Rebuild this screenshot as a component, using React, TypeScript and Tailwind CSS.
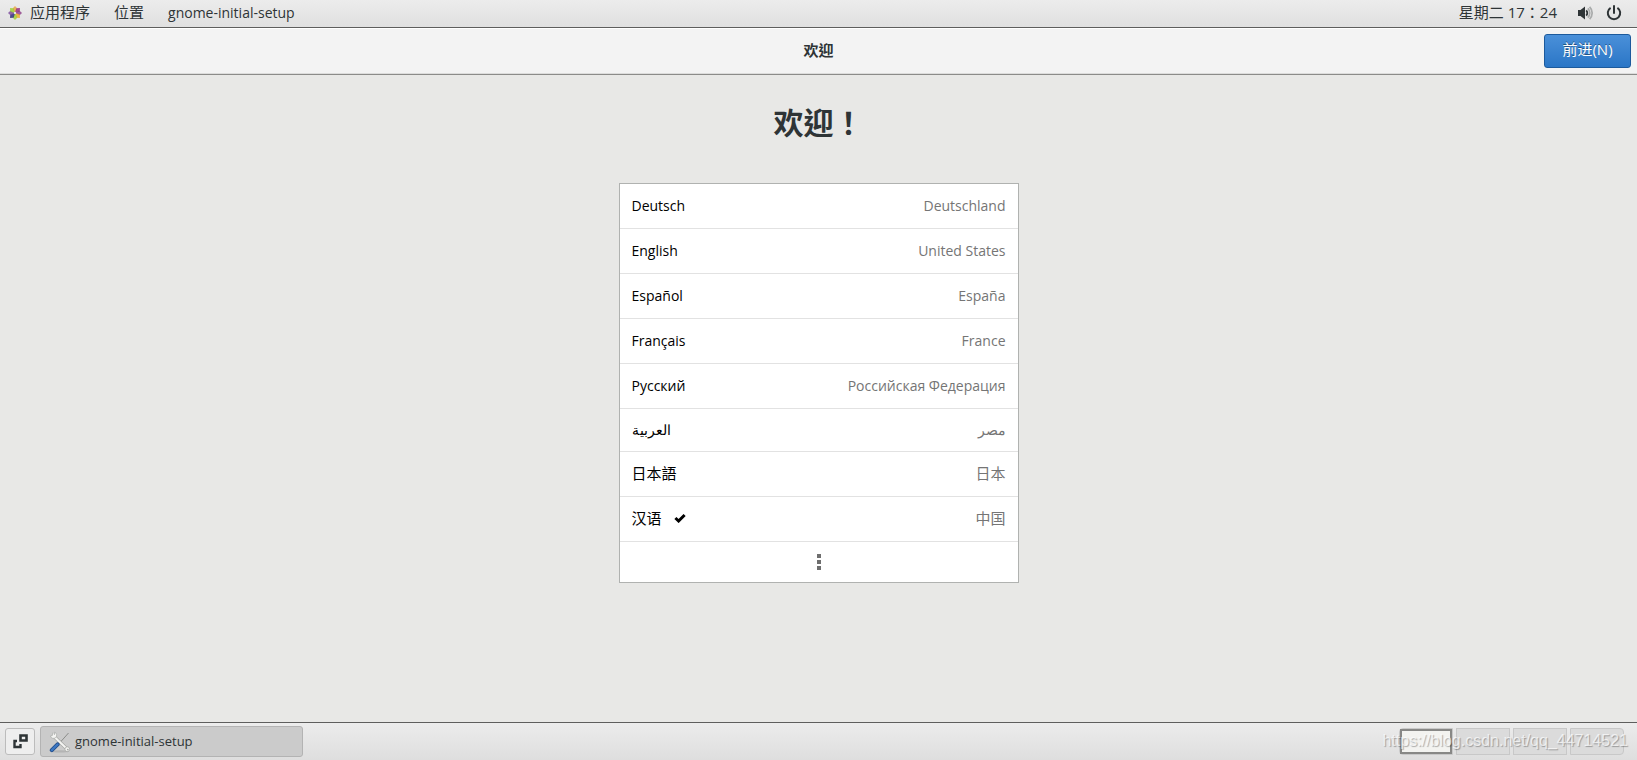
import React, { useState } from 'react';

type Language = {
  id: string;
  name: string;
  country: string;
  className?: string;
};

const languages: Language[] = [
  { id: 'de', name: 'Deutsch', country: 'Deutschland' },
  { id: 'en', name: 'English', country: 'United States' },
  { id: 'es', name: 'Español', country: 'España' },
  { id: 'fr', name: 'Français', country: 'France' },
  { id: 'ru', name: 'Русский', country: 'Российская Федерация' },
  { id: 'ar', name: 'العربية', country: 'مصر', className: 'h-[43px] text-[14px]' },
  { id: 'ja', name: '日本語', country: '日本', className: 'h-[45px] text-[15px]' },
  { id: 'zh', name: '汉语', country: '中国', className: 'h-[45px] text-[15px]' },
];

const petals = [
  { angle: 0, color: '#e8a33d' },
  { angle: 45, color: '#932279' },
  { angle: 90, color: '#8d3c86' },
  { angle: 135, color: '#efa724' },
  { angle: 180, color: '#9ccd2a' },
  { angle: 225, color: '#262577' },
  { angle: 270, color: '#7b4a9c' },
  { angle: 315, color: '#9ccd2a' },
];

const DistroIcon = () => (
  <svg viewBox="0 0 14 14" className="h-[14px] w-[14px]" aria-hidden="true">
    {petals.map((petal) => (
      <path key={petal.angle} d="M7 0 L9.4 2.6 L7.6 6 L6.4 6 L4.6 2.6 Z" fill={petal.color} opacity="0.8" transform={`rotate(${petal.angle} 7 7)`} />
    ))}
    <circle cx="7" cy="7" r="1" fill="#e9e4ee" />
  </svg>
);

const VolumeIcon = () => (
  <svg viewBox="0 0 16 16" className="h-4 w-4" aria-hidden="true">
    <path d="M1 5h2.5L8 1.6v12.8L3.5 11H1z" fill="#2e3436" />
    <path d="M9.2 5.4a3.6 3.6 0 0 1 0 5.2" fill="none" stroke="#2e3436" strokeWidth="1.8" />
    <path d="M10.8 3.4a6.4 6.4 0 0 1 0 9.2M12.6 1.8a8.8 8.8 0 0 1 0 12.4" fill="none" stroke="#a9abab" strokeWidth="1.7" />
  </svg>
);

const PowerIcon = () => (
  <svg viewBox="0 0 16 16" className="h-4 w-4" fill="none" stroke="#2e3436" strokeWidth="2" aria-hidden="true">
    <path d="M4.6 2.8a6.2 6.2 0 1 0 6.8 0" />
    <path d="M8 1v7" strokeLinecap="round" />
  </svg>
);

const WindowsIcon = () => (
  <svg viewBox="0 0 15 15" className="h-[15px] w-[15px]" fill="none" stroke="#2e3436" aria-hidden="true">
    <path d="M7.5 1.5h6v5h-6z" strokeWidth="2.6" />
    <path d="M4 7H1.5v6h6v-3" strokeWidth="2.4" />
  </svg>
);

const ToolsIcon = () => (
  <svg viewBox="0 0 22 22" className="h-[22px] w-[22px]" aria-hidden="true">
    <ellipse cx="11" cy="20.4" rx="9" ry="1.2" fill="#b4b4b4" />
    <path d="M19.5 2 L11 11.5" stroke="#8b8d8a" strokeWidth="1" />
    <path d="M5 5.5 L17.5 17.5" stroke="#a0a29f" strokeWidth="3.2" />
    <path d="M5 5.5 L17.5 17.5" stroke="#f4f4f2" strokeWidth="2.2" />
    <path d="M3.6 1.6 L3.4 4.4 L1.4 5 A3.2 3.2 0 0 0 6.6 6.6 A3.2 3.2 0 0 0 5.6 1.2 L5.4 4" fill="#f4f4f2" stroke="#a0a29f" strokeWidth="0.6" />
    <circle cx="18.3" cy="18.2" r="2.4" fill="#f4f4f2" stroke="#a0a29f" strokeWidth="0.7" />
    <circle cx="18.8" cy="18.6" r="0.9" fill="#a5a7a4" />
    <path d="M8.6 13.4 L2.8 19.2" stroke="#204a87" strokeWidth="4" strokeLinecap="round" />
    <path d="M8.6 13.4 L2.8 19.2" stroke="#3c77c2" strokeWidth="2.4" strokeLinecap="round" />
  </svg>
);

const CheckIcon = () => (
  <svg viewBox="0 0 12 10" className="h-[10px] w-3" aria-hidden="true">
    <path d="M1.4 5 L4.6 8 L10.6 2" fill="none" stroke="#000" strokeWidth="3" />
  </svg>
);

const MoreIcon = () => (
  <svg viewBox="0 0 4 16" className="h-4 w-1" fill="#6e6e6e" aria-hidden="true">
    <path d="M0 0h4v4H0zM0 6h4v4H0zM0 12h4v4H0z" />
  </svg>
);

const TopBar = () => (
  <header className="flex h-7 items-center justify-between border-b border-[#5e5e5d] bg-gradient-to-b from-[#ececec] to-[#e0e0e0] pr-[15px] pb-0.5 pl-2 text-[15px]">
    <nav className="flex items-center">
      <button type="button" className="flex items-center gap-2">
        <DistroIcon />
        应用程序
      </button>
      <button type="button" className="ml-6">位置</button>
      <button type="button" className="ml-6 text-[14px]">gnome-initial-setup</button>
    </nav>
    <div className="flex items-center">
      <button type="button" className="mr-5">星期二 17：24</button>
      <button type="button" aria-label="音量" className="mr-[13px]"><VolumeIcon /></button>
      <button type="button" aria-label="电源"><PowerIcon /></button>
    </div>
  </header>
);

const TitleBar = () => (
  <div className="grid h-[47px] grid-cols-[1fr_auto_1fr] items-center border-t border-b border-t-white border-b-[#8b8b89] bg-[#f3f3f3] px-[6px] pb-0.5 shadow-[inset_0_-1px_0_#dcdcdb]">
    <span />
    <h2 className="text-[15px] font-bold">欢迎</h2>
    <button
      type="button"
      className="h-[34px] w-[87px] justify-self-end rounded-[3px] border border-[#1c5a9c] bg-gradient-to-b from-[#4a90d9] to-[#2a76c6] pb-0.5 text-[15px] text-white [text-shadow:0_-1px_rgba(0,0,0,0.4)]"
    >
      前进(N)
    </button>
  </div>
);

const Taskbar = () => (
  <footer className="flex h-[38px] items-center border-t border-[#5e5e5d] bg-gradient-to-b from-[#ececec] to-[#dedede] pr-[13px] pl-[5px]">
    <button type="button" aria-label="显示桌面" className="flex h-[27px] w-[30px] items-center justify-center rounded-[3px] border border-[#bcbcbc] bg-[#eeeeee]">
      <WindowsIcon />
    </button>
    <button type="button" className="ml-[5px] flex h-[31px] w-[263px] items-center gap-1 rounded-[3px] border border-[#b3b3b3] bg-[#cbcbcb] px-2 text-[13px]">
      <ToolsIcon />
      gnome-initial-setup
    </button>
    <div className="relative ml-auto flex gap-[3px]">
      <button type="button" aria-label="工作区 1" className="h-[27px] w-[54px] rounded-l-[4px] border border-[#c8c8c8] bg-[#dbdbdb]">
        <span className="block h-[25px] w-[52px] border-2 border-[#888886] bg-[#f3f3f0]" />
      </button>
      <button type="button" aria-label="工作区 2" className="h-[27px] w-[54px] border border-[#c8c8c8] bg-[#dbdbdb]" />
      <button type="button" aria-label="工作区 3" className="h-[27px] w-[54px] border border-[#c8c8c8] bg-[#dbdbdb]" />
      <button type="button" aria-label="工作区 4" className="h-[27px] w-[54px] rounded-r-[4px] border border-[#c8c8c8] bg-[#dbdbdb]" />
      <span className="pointer-events-none absolute top-0 -right-1 font-['Liberation_Sans'] text-[16px] leading-[26px] whitespace-nowrap text-white/70 [text-shadow:1px_1px_1px_rgba(0,0,0,0.3)]">
        https://blog.csdn.net/qq_44714521
      </span>
    </div>
  </footer>
);

export default function App() {
  const [selected, setSelected] = useState('zh');

  return (
    <div className="flex min-h-screen flex-col bg-[#e8e8e6] font-['Open_Sans','Noto_Sans_CJK_TC',sans-serif] text-[#2e3436]">
      <TopBar />
      <TitleBar />
      <main className="flex flex-1 flex-col items-center pt-7">
        <h1 className="text-[30px] leading-10 font-bold">欢迎！</h1>
        <ul className="mt-10 w-[400px] border border-[#b0b2b0] bg-white">
          {languages.map((language) => (
            <li key={language.id} className={`${language.className ?? 'h-[45px] text-[14px]'} border-b border-[#e2e2e2]`}>
              <button type="button" onClick={() => setSelected(language.id)} className="flex h-full w-full items-center px-3 pb-0.5">
                <span className="text-black">{language.name}</span>
                {selected === language.id && (
                  <span className="ml-3">
                    <CheckIcon />
                  </span>
                )}
                <span className="ml-auto text-[#757575]">{language.country}</span>
              </button>
            </li>
          ))}
          <li className="h-10">
            <button type="button" aria-label="更多" className="flex h-full w-full items-center justify-center">
              <MoreIcon />
            </button>
          </li>
        </ul>
      </main>
      <Taskbar />
    </div>
  );
}
